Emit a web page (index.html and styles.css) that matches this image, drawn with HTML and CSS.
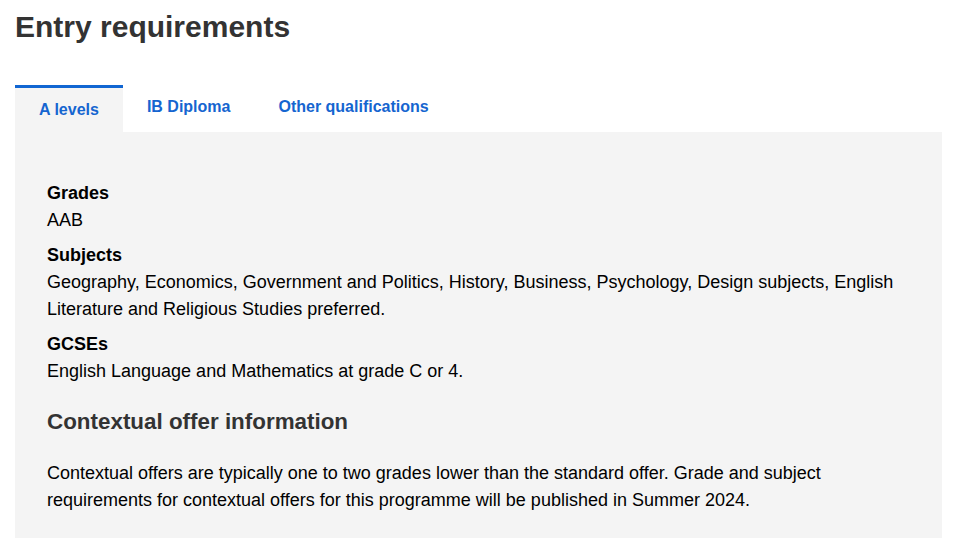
FILE: index.html
```html
<!DOCTYPE html>
<html lang="en">
<head>
<meta charset="utf-8">
<title>Entry requirements</title>
<link rel="stylesheet" href="styles.css">
</head>
<body>
<main class="page">
  <h1 class="title">Entry requirements</h1>
  <div class="tabs">
    <ul class="tab-list">
      <li class="tab tab-active"><a href="#alevels">A levels</a></li>
      <li class="tab"><a href="#ib">IB Diploma</a></li>
      <li class="tab"><a href="#other">Other qualifications</a></li>
    </ul>
    <section class="panel" id="alevels">
      <dl class="reqs">
        <div class="req">
          <dt>Grades</dt>
          <dd>AAB</dd>
        </div>
        <div class="req">
          <dt>Subjects</dt>
          <dd>Geography, Economics, Government and Politics, History, Business, Psychology, Design subjects, English Literature and Religious Studies preferred.</dd>
        </div>
        <div class="req">
          <dt>GCSEs</dt>
          <dd>English Language and Mathematics at grade C or 4.</dd>
        </div>
      </dl>
      <h2 class="subhead">Contextual offer information</h2>
      <p class="text">Contextual offers are typically one to two grades lower than the standard offer. Grade and subject requirements for contextual offers for this programme will be published in Summer 2024.</p>
    </section>
  </div>
</main>
</body>
</html>
```
FILE: styles.css
```css
* { box-sizing: border-box; }

html, body {
  margin: 0;
  padding: 0;
  background: #ffffff;
}

body {
  font-family: "Liberation Sans", Arial, sans-serif;
  color: #000000;
}

.page {
  padding: 0 11px 0 15px;
}

.title {
  margin: 9px 0 0 0;
  font-size: 30px;
  line-height: 36px;
  font-weight: 700;
  color: #333333;
}

.tabs {
  margin-top: 40px;
}

.tab-list {
  list-style: none;
  margin: 0;
  padding: 0;
  display: flex;
  align-items: flex-start;
}

.tab a {
  display: block;
  padding: 10px 24px;
  font-size: 16px;
  line-height: 24px;
  font-weight: 700;
  color: #1565d0;
  text-decoration: none;
}

.tab-active {
  background: #f4f4f4;
  border-top: 3px solid #1166d2;
}

.panel {
  background: #f4f4f4;
  padding: 48px 32px 24px 32px;
}

.reqs {
  margin: 0;
  display: flex;
  flex-direction: column;
  gap: 8px;
}

.req dt {
  font-weight: 700;
  font-size: 18px;
  line-height: 27px;
}

.req dd {
  margin: 0;
  font-size: 18px;
  line-height: 27px;
}

.subhead {
  margin: 23px 0 0 0;
  font-size: 22.4px;
  line-height: 28px;
  font-weight: 700;
  color: #333333;
}

.text {
  margin: 24px 0 0 0;
  font-size: 18px;
  line-height: 27px;
}
```
